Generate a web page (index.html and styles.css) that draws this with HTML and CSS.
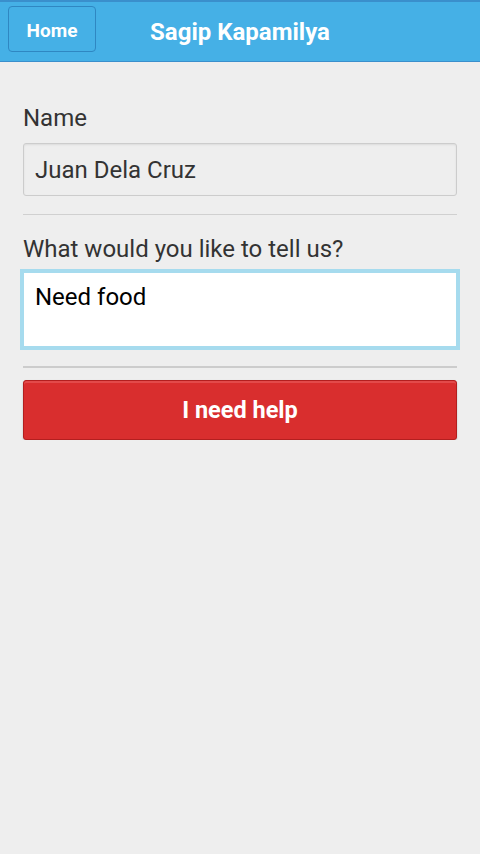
FILE: index.html
```html
<!DOCTYPE html>
<html lang="en">
<head>
    <meta charset="UTF-8">
    <meta name="viewport" content="width=device-width, initial-scale=1.0">
    <title>Sagip Kapamilya</title>
    <link rel="stylesheet" href="styles.css">
</head>
<body>
    <!-- Header bar -->
    <div class="header">
        <a href="#" class="home-btn">Home</a>
        <h1>Sagip Kapamilya</h1>
    </div>

    <div class="content">
        <div class="field">
            <label for="name">Name</label>
            <input type="text" id="name" value="Juan Dela Cruz">
        </div>

        <div class="field field-message">
            <label for="message">What would you like to tell us?</label>
            <textarea id="message">Need food</textarea>
        </div>

        <button class="help-btn">I need help</button>
    </div>
</body>
</html>
```

FILE: styles.css
```css
* {
    box-sizing: border-box;
}

body {
    font-family: Roboto, "Liberation Sans", sans-serif;
    background-color: #eeeeee;
    margin: 0;
    padding: 0;
    color: #333;
}

.header {
    position: relative;
    height: 62px;
    background-color: #45b0e6;
    border-top: 2px solid #3a8fcc;
    border-bottom: 1px solid #3a8fcc;
    display: flex;
    align-items: center;
    justify-content: center;
}

.header h1 {
    margin: 0;
    font-size: 24px;
    font-weight: bold;
    color: #fff;
}

.home-btn {
    position: absolute;
    left: 8px;
    top: 4px;
    width: 88px;
    height: 46px;
    padding-top: 2px;
    border: 1px solid #2f87c2;
    border-radius: 4px;
    color: #fff;
    font-weight: bold;
    font-size: 19px;
    text-decoration: none;
    display: flex;
    align-items: center;
    justify-content: center;
}

.content {
    padding: 41px 23px 0;
}

.field {
    padding-bottom: 18px;
    border-bottom: 1px solid #d0d0d0;
    margin-bottom: 19px;
}

.field label {
    display: block;
    font-size: 24px;
    line-height: 30px;
}

.field input {
    display: block;
    width: 100%;
    height: 53px;
    margin-top: 10px;
    padding: 0 11px;
    font-family: inherit;
    font-size: 24px;
    color: #333;
    background-color: #eeeeee;
    border: 1px solid #cccccc;
    border-radius: 3px;
    box-shadow: inset 0 1px 2px rgba(0, 0, 0, 0.08);
}

.field-message {
    padding-bottom: 19px;
    border-bottom: 2px solid #cccccc;
    margin-bottom: 12px;
}

.field textarea {
    display: block;
    width: 100%;
    height: 75px;
    margin-top: 8px;
    padding: 9px 11px;
    font-family: inherit;
    font-size: 24px;
    line-height: 30px;
    color: #000;
    background-color: #fff;
    border: 1px solid #a6dbee;
    border-radius: 0;
    box-shadow: 0 0 0 3px #a6dbee;
    resize: none;
    outline: none;
}

.help-btn {
    display: block;
    width: 100%;
    height: 60px;
    font-family: inherit;
    font-size: 23.5px;
    font-weight: bold;
    color: #fff;
    background-color: #d92e2e;
    border: 1px solid #b31f1f;
    border-radius: 3px;
    box-shadow: inset 0 2px 0 #e24a4a, 0 1px 2px rgba(0, 0, 0, 0.2);
    cursor: pointer;
}
```
